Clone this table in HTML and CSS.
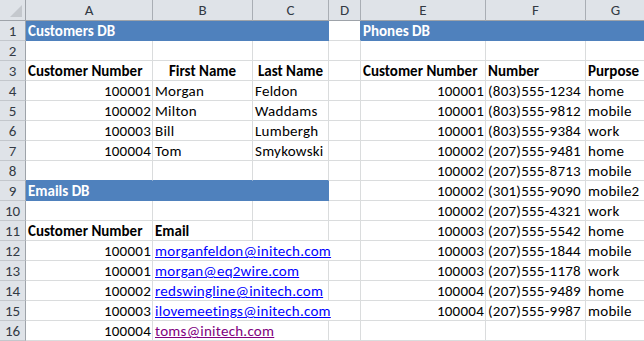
FILE: index.html
```html
<!DOCTYPE html>
<html>
<head>
<meta charset="utf-8">
<link rel="stylesheet" href="styles.css">
</head>
<body>
<div class="sheet">
  <div class="hd corner"><span class="tri"></span></div>
  <div class="hd">A</div><div class="hd">B</div><div class="hd">C</div><div class="hd">D</div><div class="hd">E</div><div class="hd">F</div><div class="hd">G</div>

  <div class="rh">1</div>
  <div class="c blue span3">Customers DB</div>
  <div class="c br-blue"></div>
  <div class="c blue span3">Phones DB</div>

  <div class="rh">2</div>
  <div class="c"></div><div class="c"></div><div class="c"></div><div class="c"></div><div class="c"></div><div class="c"></div><div class="c"></div>

  <div class="rh">3</div>
  <div class="c b">Customer Number</div><div class="c b ctr">First Name</div><div class="c b ctr">Last Name</div><div class="c"></div>
  <div class="c b">Customer Number</div><div class="c b">Number</div><div class="c b">Purpose</div>

  <div class="rh">4</div>
  <div class="c r">100001</div><div class="c">Morgan</div><div class="c">Feldon</div><div class="c"></div>
  <div class="c r">100001</div><div class="c">(803)555-1234</div><div class="c">home</div>

  <div class="rh">5</div>
  <div class="c r">100002</div><div class="c">Milton</div><div class="c">Waddams</div><div class="c"></div>
  <div class="c r">100001</div><div class="c">(803)555-9812</div><div class="c">mobile</div>

  <div class="rh">6</div>
  <div class="c r">100003</div><div class="c">Bill</div><div class="c">Lumbergh</div><div class="c"></div>
  <div class="c r">100001</div><div class="c">(803)555-9384</div><div class="c">work</div>

  <div class="rh">7</div>
  <div class="c r">100004</div><div class="c">Tom</div><div class="c">Smykowski</div><div class="c"></div>
  <div class="c r">100002</div><div class="c">(207)555-9481</div><div class="c">home</div>

  <div class="rh">8</div>
  <div class="c bb-blue"></div><div class="c bb-blue"></div><div class="c bb-blue"></div><div class="c"></div>
  <div class="c r">100002</div><div class="c">(207)555-8713</div><div class="c">mobile</div>

  <div class="rh">9</div>
  <div class="c blue span3">Emails DB</div><div class="c"></div>
  <div class="c r">100002</div><div class="c">(301)555-9090</div><div class="c">mobile2</div>

  <div class="rh">10</div>
  <div class="c"></div><div class="c"></div><div class="c"></div><div class="c"></div>
  <div class="c r">100002</div><div class="c">(207)555-4321</div><div class="c">work</div>

  <div class="rh">11</div>
  <div class="c b">Customer Number</div><div class="c b">Email</div><div class="c"></div><div class="c"></div>
  <div class="c r">100003</div><div class="c">(207)555-5542</div><div class="c">home</div>

  <div class="rh">12</div>
  <div class="c r">100001</div><div class="c span3"><span class="link">morganfeldon@initech.com</span></div>
  <div class="c r">100003</div><div class="c">(207)555-1844</div><div class="c">mobile</div>

  <div class="rh">13</div>
  <div class="c r">100001</div><div class="c span2"><span class="link">morgan@eq2wire.com</span></div><div class="c"></div>
  <div class="c r">100003</div><div class="c">(207)555-1178</div><div class="c">work</div>

  <div class="rh">14</div>
  <div class="c r">100002</div><div class="c span2"><span class="link">redswingline@initech.com</span></div><div class="c"></div>
  <div class="c r">100004</div><div class="c">(207)555-9489</div><div class="c">home</div>

  <div class="rh">15</div>
  <div class="c r">100003</div><div class="c span3"><span class="link">ilovemeetings@initech.com</span></div>
  <div class="c r">100004</div><div class="c">(207)555-9987</div><div class="c">mobile</div>

  <div class="rh">16</div>
  <div class="c r">100004</div><div class="c span2"><span class="link visited">toms@initech.com</span></div><div class="c"></div>
  <div class="c"></div><div class="c"></div><div class="c"></div>
</div>
</body>
</html>
```

FILE: styles.css
```css
html, body {
  margin: 0;
  padding: 0;
  background: #ffffff;
  overflow: hidden;
}

.sheet {
  display: grid;
  grid-template-columns: 26px 127px 100px 76px 32px 125px 100px 60px;
  grid-template-rows: 21px repeat(16, 20px);
  font-family: Carlito, Lato, "Liberation Sans", sans-serif;
  font-size: 15px;
  letter-spacing: 0.25px;
  color: #000000;
  width: 646px;
}

.hd, .rh, .c {
  box-sizing: border-box;
  border-right: 1px solid #dadcdd;
  border-bottom: 1px solid #dadcdd;
  white-space: nowrap;
  line-height: 20px;
}

.hd {
  background: #dfe3e8;
  border-right-color: #a9aeb4;
  border-bottom-color: #9ea3a9;
  text-align: center;
  color: #333a44;
  line-height: 21px;
  letter-spacing: 0;
}

.corner {
  position: relative;
  border-right-color: #9ea3a9;
}

.tri {
  position: absolute;
  right: 3px;
  bottom: 3px;
  width: 0;
  height: 0;
  border-left: 12px solid transparent;
  border-bottom: 12px solid #c4c8cd;
}

.rh {
  background: #dfe3e8;
  border-right-color: #9ea3a9;
  border-bottom-color: #c3c7cc;
  text-align: center;
  color: #333a44;
  letter-spacing: 0;
}

.c {
  padding: 0 2px;
  overflow: visible;
}

.b { font-weight: bold; letter-spacing: 0; }
.r { text-align: right; padding-right: 1px; }
.ctr { text-align: center; }

.span2 { grid-column: span 2; }
.span3 { grid-column: span 3; }

.blue {
  background: #4f81bd;
  border-color: #4f81bd;
  color: #ffffff;
  font-weight: bold;
  letter-spacing: 0;
}

.br-blue { border-right-color: #4f81bd; }
.bb-blue { border-bottom-color: #4f81bd; }

.link {
  color: #0000ff;
  text-decoration: underline;
}

.visited { color: #800080; }
```
